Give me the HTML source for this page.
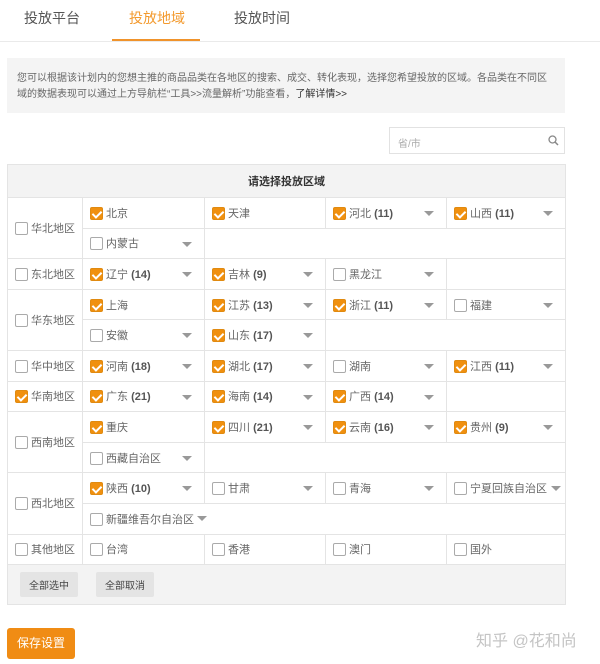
<!DOCTYPE html>
<html><head><meta charset="utf-8"><style>
*{margin:0;padding:0;box-sizing:border-box}
body{width:600px;height:664px;background:#fff;font-family:"Liberation Sans","Noto Sans CJK SC",sans-serif;color:#666;font-size:11px;position:relative;overflow:hidden}
.tab{position:absolute;top:8px;font-size:14px;color:#555}
.line{position:absolute;left:0;right:0;top:41px;height:1px;background:#eaeaea}
.ul{position:absolute;left:112px;width:88px;top:39px;height:2px;background:#f0932b}
.note{position:absolute;left:7px;top:58px;width:558px;height:55px;background:#f4f4f4;padding:13px 10px;font-size:10px;line-height:16px;color:#666}
.search{position:absolute;left:389px;top:127px;width:176px;height:27px;border:1px solid #e2e2e2;padding:7px 8px;color:#aaa;font-size:10px}
table{position:absolute;left:7px;top:164px;width:558px;border-collapse:collapse;table-layout:fixed}
td{border:1px solid #e4e4e4;height:30.6px;padding:0 0 0 7px;position:relative;white-space:nowrap}
th{height:33px;background:#f3f3f3;border:1px solid #e4e4e4;font-size:11px;color:#333;font-weight:bold}
.cb{display:inline-block;width:13px;height:13px;border:1px solid #aaa;border-radius:2px;vertical-align:-3px;margin-right:3px;background:#fff;position:relative}
.on{background:#f0900f;border-color:#e08a10}
.on:after{content:"";position:absolute;left:3px;top:1px;width:4px;height:7px;border:solid #fff;border-width:0 2px 2px 0;transform:rotate(45deg)}
b{color:#555}
.ar{position:absolute;right:12px;top:13px;width:0;height:0;border-left:5px solid transparent;border-right:5px solid transparent;border-top:5px solid #999}
.foot td{background:#f3f3f3;height:40px}
.btn{display:inline-block;background:#e4e4e4;padding:5px 9px;margin-right:18px;color:#444;font-size:10px;border-radius:2px}
.save{position:absolute;left:7px;top:628px;width:68px;height:31px;background:#f08c14;color:#fff;font-size:12px;text-align:center;line-height:31px;border-radius:3px}
.wm{position:absolute;left:476px;top:627px;font-size:16px;color:#c4c4c4}
</style></head><body>
<div class="tab" style="left:24px">投放平台</div>
<div class="tab" style="left:129px;color:#f39a2e">投放地域</div>
<div class="tab" style="left:234px">投放时间</div>
<div class="line"></div><div class="ul"></div>
<div class="note">您可以根据该计划内的您想主推的商品品类在各地区的搜索、成交、转化表现，选择您希望投放的区域。各品类在不同区域的数据表现可以通过上方导航栏“工具&gt;&gt;流量解析”功能查看，<span style="color:#333">了解详情&gt;&gt;</span></div>
<div class="search">省/市<svg style="position:absolute;right:5px;top:7px" width="11" height="11" viewBox="0 0 11 11"><circle cx="4.5" cy="4.5" r="3.5" fill="none" stroke="#888" stroke-width="1.3"/><path d="M7 7L10 10" stroke="#888" stroke-width="1.5"/></svg></div>
<table>
<colgroup><col style="width:75px"><col style="width:122px"><col style="width:121px"><col style="width:121px"><col style="width:119px"></colgroup>
<tr><th colspan="5">请选择投放区域</th></tr>
<tr><td rowspan="2"><span class="cb"></span>华北地区</td><td><span class="cb on"></span>北京</td><td><span class="cb on"></span>天津</td><td><span class="cb on"></span>河北 <b>(11)</b><i class="ar"></i></td><td><span class="cb on"></span>山西 <b>(11)</b><i class="ar"></i></td></tr>
<tr><td><span class="cb"></span>内蒙古<i class="ar"></i></td><td colspan="3" style="border-left:none"></td></tr>
<tr><td><span class="cb"></span>东北地区</td><td><span class="cb on"></span>辽宁 <b>(14)</b><i class="ar"></i></td><td><span class="cb on"></span>吉林 <b>(9)</b><i class="ar"></i></td><td><span class="cb"></span>黑龙江<i class="ar"></i></td><td></td></tr>
<tr><td rowspan="2"><span class="cb"></span>华东地区</td><td><span class="cb on"></span>上海</td><td><span class="cb on"></span>江苏 <b>(13)</b><i class="ar"></i></td><td><span class="cb on"></span>浙江 <b>(11)</b><i class="ar"></i></td><td><span class="cb"></span>福建<i class="ar"></i></td></tr>
<tr><td><span class="cb"></span>安徽<i class="ar"></i></td><td><span class="cb on"></span>山东 <b>(17)</b><i class="ar"></i></td><td colspan="2"></td></tr>
<tr><td><span class="cb"></span>华中地区</td><td><span class="cb on"></span>河南 <b>(18)</b><i class="ar"></i></td><td><span class="cb on"></span>湖北 <b>(17)</b><i class="ar"></i></td><td><span class="cb"></span>湖南<i class="ar"></i></td><td><span class="cb on"></span>江西 <b>(11)</b><i class="ar"></i></td></tr>
<tr><td><span class="cb on"></span>华南地区</td><td><span class="cb on"></span>广东 <b>(21)</b><i class="ar"></i></td><td><span class="cb on"></span>海南 <b>(14)</b><i class="ar"></i></td><td><span class="cb on"></span>广西 <b>(14)</b><i class="ar"></i></td><td></td></tr>
<tr><td rowspan="2"><span class="cb"></span>西南地区</td><td><span class="cb on"></span>重庆</td><td><span class="cb on"></span>四川 <b>(21)</b><i class="ar"></i></td><td><span class="cb on"></span>云南 <b>(16)</b><i class="ar"></i></td><td><span class="cb on"></span>贵州 <b>(9)</b><i class="ar"></i></td></tr>
<tr><td><span class="cb"></span>西藏自治区<i class="ar"></i></td><td colspan="3"></td></tr>
<tr><td rowspan="2"><span class="cb"></span>西北地区</td><td><span class="cb on"></span>陕西 <b>(10)</b><i class="ar"></i></td><td><span class="cb"></span>甘肃<i class="ar"></i></td><td><span class="cb"></span>青海<i class="ar"></i></td><td><span class="cb"></span>宁夏回族自治区<i class="ar" style="right:4px"></i></td></tr>
<tr><td colspan="4"><span class="cb"></span>新疆维吾尔自治区 <i class="ar" style="position:static;display:inline-block;vertical-align:2px"></i></td></tr>
<tr><td><span class="cb"></span>其他地区</td><td><span class="cb"></span>台湾</td><td><span class="cb"></span>香港</td><td><span class="cb"></span>澳门</td><td><span class="cb"></span>国外</td></tr>
<tr class="foot"><td colspan="5" style="padding-left:12px"><span class="btn">全部选中</span><span class="btn">全部取消</span></td></tr>
</table>
<div class="save">保存设置</div>
<div class="wm">知乎 @花和尚</div>
</body></html>
